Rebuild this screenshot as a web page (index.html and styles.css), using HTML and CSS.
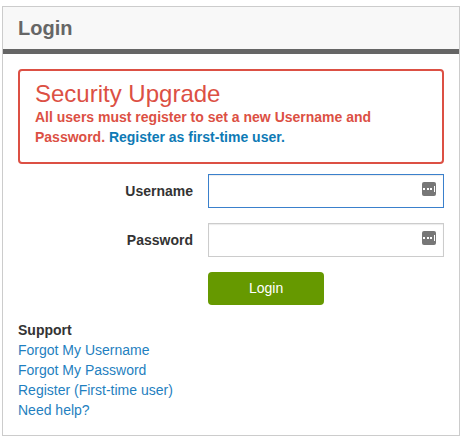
FILE: index.html
```html
<!DOCTYPE html>
<html lang="en">

<head>
  <meta charset="UTF-8" />
  <meta name="viewport" content="width=device-width, initial-scale=1.0" />
  <title>Login</title>
  <link rel="stylesheet" href="styles.css">
</head>

<body>
  <div class="panel">
    <div class="panel-header">
      <h1>Login</h1>
    </div>

    <div class="panel-body">
      <div class="alert">
        <h2>Security Upgrade</h2>
        <p>All users must register to set a new Username and Password. <a href="#">Register as first-time user.</a></p>
      </div>

      <form class="login-form">
        <label for="username">Username</label>
        <div class="field">
          <input type="text" id="username" class="active" />
          <svg class="field-icon" viewBox="0 0 14 14" aria-hidden="true">
            <rect width="14" height="14" rx="2" fill="#777" />
            <path d="M1 6h2v2H1zM5 6h2v2H5zM8 6h2v2H8zM12 4h1v6h-1z" fill="#fff" />
          </svg>
        </div>

        <label for="password">Password</label>
        <div class="field">
          <input type="password" id="password" />
          <svg class="field-icon" viewBox="0 0 14 14" aria-hidden="true">
            <rect width="14" height="14" rx="2" fill="#777" />
            <path d="M1 6h2v2H1zM5 6h2v2H5zM8 6h2v2H8zM12 4h1v6h-1z" fill="#fff" />
          </svg>
        </div>

        <button type="button" class="login-btn">Login</button>
      </form>

      <div class="support">
        <strong>Support</strong>
        <a href="#">Forgot My Username</a>
        <a href="#">Forgot My Password</a>
        <a href="#">Register (First-time user)</a>
        <a href="#">Need help?</a>
      </div>
    </div>
  </div>
</body>

</html>
```
FILE: styles.css
```css
/* General Styles */
* {
  box-sizing: border-box;
}

body {
  margin: 6px 0 4px 2px;
  background: #fff;
  color: #333;
  font-family: "Liberation Sans", Arial, sans-serif;
  font-size: 14px;
  line-height: 20px;
}

a {
  color: #1f7fc0;
  text-decoration: none;
}

a:hover {
  text-decoration: underline;
}

/* Panel */
.panel {
  border: 1px solid #ccc;
}

.panel-header {
  padding: 9px 15px;
  background: #f8f8f8;
  border-bottom: 5px solid #666;
}

.panel-header h1 {
  margin: 0;
  color: #666;
  font-size: 20px;
  line-height: 24px;
}

.panel-body {
  padding: 15px;
}

/* Security notice */
.alert {
  padding: 10px 15px 15px;
  border: 2px solid #dc5044;
  border-radius: 4px;
  color: #dc5044;
}

.alert h2 {
  margin: 0;
  font-size: 24px;
  font-weight: normal;
  line-height: 26px;
}

.alert p {
  margin: 0;
  font-weight: bold;
}

.alert a {
  color: #0e7ab5;
}

/* Login form */
.login-form {
  display: grid;
  grid-template-columns: 175px 1fr;
  gap: 15px;
  align-items: center;
  margin: 10px 0 15px;
}

.login-form label {
  font-weight: bold;
  text-align: right;
}

.field {
  position: relative;
}

.field input {
  display: block;
  width: 100%;
  height: 34px;
  padding: 6px 28px 6px 12px;
  border: 1px solid #ccc;
  background: #fff;
  box-shadow: inset 0 1px 1px rgba(0, 0, 0, 0.08);
  font: inherit;
  outline: none;
}

.field input.active,
.field input:focus {
  border-color: #3a80cc;
}

.field-icon {
  position: absolute;
  top: 8px;
  right: 8px;
  width: 14px;
  height: 14px;
}

.login-btn {
  grid-column: 2;
  justify-self: start;
  padding: 6px 41px;
  border: 0;
  border-radius: 4px;
  background: #690;
  color: #fff;
  font: inherit;
  line-height: 21px;
  cursor: pointer;
}

/* Support links */
.support {
  display: flex;
  flex-direction: column;
  align-items: flex-start;
}
```
